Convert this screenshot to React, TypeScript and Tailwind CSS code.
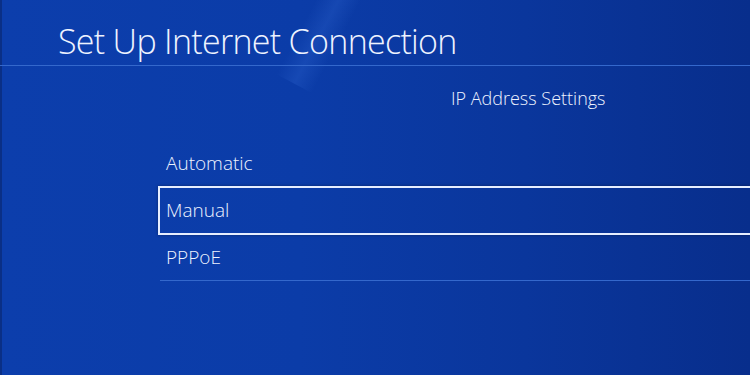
export default function App() {
  const font = { fontFamily: '"Open Sans", "Noto Sans", sans-serif' };
  return (
    <div
      className="relative w-[750px] h-[375px] overflow-hidden bg-[linear-gradient(90deg,#0c3eac_0%,#0b3ca8_40%,#0a369c_70%,#082e8c_100%)] text-[#eef3ff]"
      style={font}
    >
      {/* decorative light streak */}
      <div className="pointer-events-none absolute left-[300px] top-[-20px] w-[40px] h-[110px] rotate-[28deg] bg-[linear-gradient(90deg,rgba(90,150,255,0)_0%,rgba(90,150,255,0.14)_50%,rgba(90,150,255,0)_100%)]" />
      <div className="pointer-events-none absolute left-0 top-0 w-[2px] h-full bg-[#0a2f86]" />

      <div className="relative flex flex-col">
        <div className="h-[65px] flex items-end pl-[58px] pb-0">
          <h1 className="text-[34px] font-light leading-[48px] tracking-[-0.7px]">
            Set Up Internet Connection
          </h1>
        </div>
        <div className="h-px bg-[#3468cc]" />
        <div className="h-[74px] flex items-start pl-[451px] pt-[20px]">
          <span className="text-[18px] font-light leading-[24px]">IP Address Settings</span>
        </div>
        <div className="ml-[158px] flex flex-col">
          <div className="h-[46px] flex items-center pl-[8px] text-[19px] font-light">Automatic</div>
          <div className="h-[49px] flex items-center pl-[6px] text-[19px] font-light border-2 border-r-0 border-[#e6eeff] shadow-[0_0_3px_rgba(0,0,0,0.35)]">
            Manual
          </div>
          <div className="h-[45px] flex items-center pl-[8px] text-[19px] font-light">PPPoE</div>
          <div className="ml-[2px] h-px bg-[#3468cc]" />
        </div>
      </div>
    </div>
  );
}
